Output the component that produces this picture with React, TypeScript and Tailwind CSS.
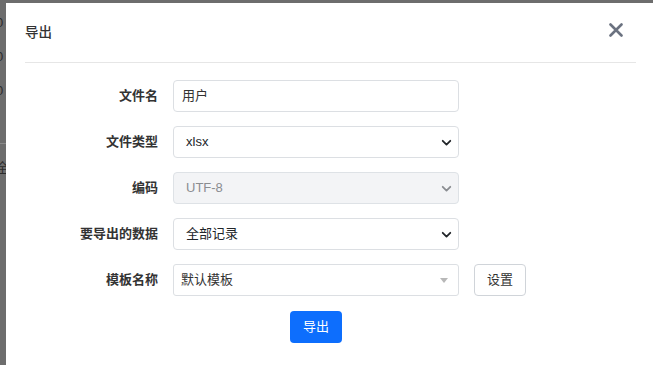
import React from 'react';

const FONT = { fontFamily: '"Liberation Sans", "Noto Sans CJK SC", sans-serif' };

const Chevron = ({ color = '#212529' }: { color?: string }) => (
    <svg width="11" height="11" viewBox="0 0 16 16" fill="none">
        <path d="M2.5 5.5l5.5 5.5 5.5-5.5" stroke={color} strokeWidth="2.6" strokeLinecap="round" strokeLinejoin="round" />
    </svg>
);

const Row = ({ label, children }: { label: string; children: React.ReactNode }) => (
    <div className="flex items-center h-[32px]">
        <div className="w-[133px] text-right text-[13px] font-bold text-[#333]">{label}</div>
        <div className="ml-[15px] flex items-center">{children}</div>
    </div>
);

export default function App() {
    return (
        <div className="w-[653px] h-[365px] overflow-hidden bg-[#6d6d6d] flex" style={FONT}>
            {/* page behind the overlay */}
            <div className="w-[6px] shrink-0 overflow-hidden">
                <div className="w-[20px] -ml-[4px] text-[13px] text-[#2b2b2b]">
                    <div className="h-[34px] pt-[14px] leading-[18px]">0</div>
                    <div className="h-[34px] pt-[14px] leading-[18px]">0</div>
                    <div className="h-[34px] pt-[14px] leading-[18px]">0</div>
                    <div className="h-[42px] border-b border-[#8a8a8a]"></div>
                    <div className="pt-[15px] leading-[18px]">全</div>
                </div>
            </div>

            <div className="flex-1 mt-[3px] bg-white pl-[19px] pr-[17px]">
                <div className="h-[60px] flex items-center justify-between border-b border-[#e6e6e6]">
                    <span className="text-[13.5px] font-medium text-[#333] pt-[1px]">导出</span>
                    <svg width="14" height="14" viewBox="0 0 14 14" className="mr-[13px] -mt-[6px]">
                        <path d="M1.5 1.5l11 11M12.5 1.5l-11 11" stroke="#6b7280" strokeWidth="2.6" strokeLinecap="round" />
                    </svg>
                </div>

                <div className="pt-[17px] flex flex-col gap-[14px]">
                    <Row label="文件名">
                        <div className="w-[286px] h-[32px] border border-[#dcdfe3] rounded-[4px] px-[8px] flex items-center text-[13px] text-[#333]">用户</div>
                    </Row>
                    <Row label="文件类型">
                        <div className="w-[286px] h-[32px] border border-[#dcdfe3] rounded-[4px] pl-[12px] pr-[6px] flex items-center justify-between text-[13px] text-[#212529]">
                            <span>xlsx</span>
                            <Chevron />
                        </div>
                    </Row>
                    <Row label="编码">
                        <div className="w-[286px] h-[32px] border border-[#dee2e6] bg-[#f3f4f6] rounded-[4px] pl-[12px] pr-[6px] flex items-center justify-between text-[13px] text-[#8a8d91]">
                            <span>UTF-8</span>
                            <Chevron color="#8a8d91" />
                        </div>
                    </Row>
                    <Row label="要导出的数据">
                        <div className="w-[286px] h-[32px] border border-[#dcdfe3] rounded-[4px] pl-[12px] pr-[6px] flex items-center justify-between text-[13px] text-[#212529]">
                            <span>全部记录</span>
                            <Chevron />
                        </div>
                    </Row>
                    <Row label="模板名称">
                        <div className="w-[286px] h-[32px] border border-[#dcdfe3] rounded-[3px] pl-[7px] pr-[10px] flex items-center justify-between text-[13px] text-[#333]">
                            <span>默认模板</span>
                            <svg width="8" height="5" viewBox="0 0 8 5">
                                <path d="M0 0h8L4 5z" fill="#b8b8b8" />
                            </svg>
                        </div>
                        <button className="ml-[15px] w-[52px] h-[32px] border border-[#d0d4d9] rounded-[4px] bg-white text-[13px] text-[#333]">设置</button>
                    </Row>
                </div>

                <div className="pl-[265px] pt-[15px]">
                    <button className="w-[52px] h-[32px] rounded-[4px] bg-[#0d6efd] text-white text-[13px]">导出</button>
                </div>
            </div>
        </div>
    );
}
